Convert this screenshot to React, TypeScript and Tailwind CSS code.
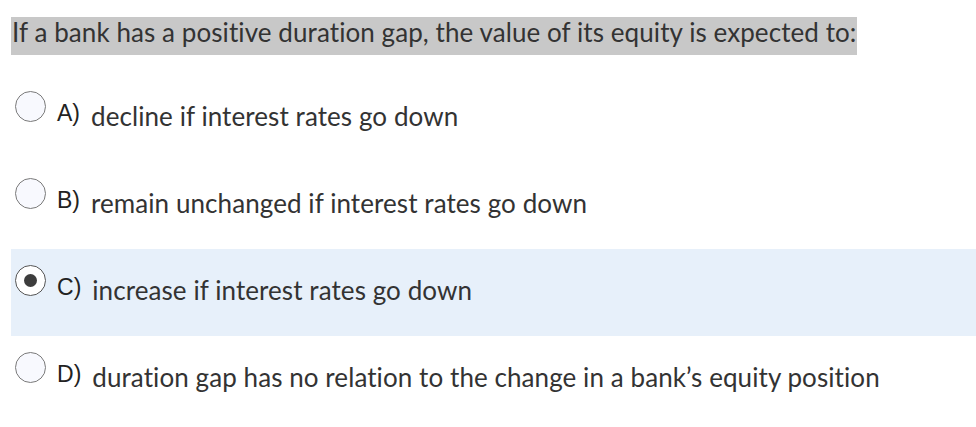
import React from 'react'

const options = [
  { key: 'A', text: 'decline if interest rates go down' },
  { key: 'B', text: 'remain unchanged if interest rates go down' },
  { key: 'C', text: 'increase if interest rates go down' },
  { key: 'D', text: "duration gap has no relation to the change in a bank\u2019s equity position" },
]

const selected = 'C'

function Radio({ checked }: { checked: boolean }) {
  return (
    <div
      className={
        checked
          ? 'mt-[16px] ml-[4px] flex h-[31px] w-[31px] shrink-0 items-center justify-center rounded-full border-[1.5px] border-[#555555] bg-white'
          : 'mt-[16px] ml-[4px] h-[31px] w-[31px] shrink-0 rounded-full border border-[#7a7a7a] bg-[#f8f9fe]'
      }
    >
      {checked && <div className="h-[13px] w-[13px] rounded-full bg-[#3d3d3d]" />}
    </div>
  )
}

export default function App() {
  return (
    <div className="min-h-screen bg-white pl-[11px] pt-[17px] text-[#333333] font-['Lato',sans-serif]">
      <div className="h-[58px]">
        <div className="inline-block h-[38px] bg-[#c8c8c8] pl-[1px] pr-[1px] text-[26px] leading-[30px] tracking-[0.08px]">
          If a bank has a positive duration gap, the value of its equity is expected to:
        </div>
      </div>
      <div className="flex flex-col">
        {options.map((o) => (
          <div
            key={o.key}
            className={
              'flex h-[87px] items-start ' + (o.key === selected ? 'bg-[#e7f0fa]' : '')
            }
          >
            <Radio checked={o.key === selected} />
            <span className="ml-[11px] mt-[25px] text-[23px] leading-[26px] text-[#222222] font-['Liberation_Sans',Arial,sans-serif]">
              {o.key})
            </span>
            <span className="ml-[11px] mt-[26px] text-[26px] leading-[30px] tracking-[0.08px]">{o.text}</span>
          </div>
        ))}
      </div>
    </div>
  )
}
